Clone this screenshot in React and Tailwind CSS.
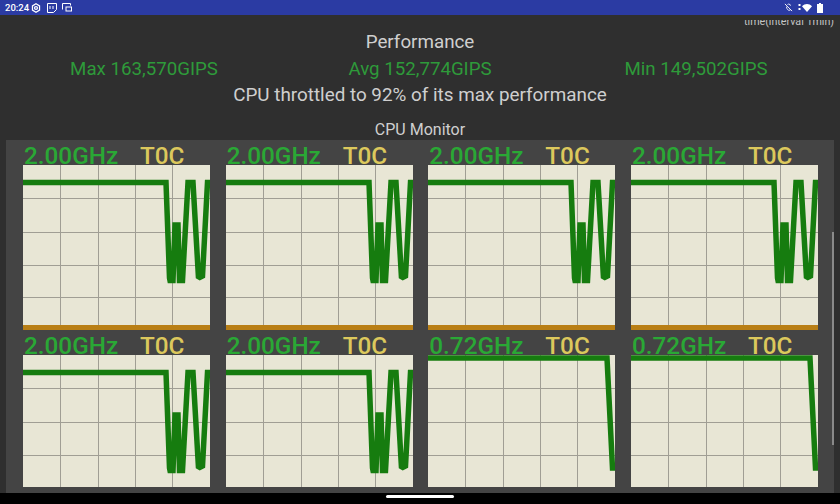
import React from "react";

const fast = "0,17.5 143,17.5 146.5,113 147,115.5 150,115.5 152,60 155,60 156.5,115.5 159.5,115.5 165,17.5 170,17.5 175.5,113 179.5,111 184.5,17.5 187,17.5";
const slow = "0,3 179,3 184.5,113 187,113";
const W = 187;

function Chart({ points, height, bar }) {
  const hl = [33, 67, 100, 132].filter((y) => y < height);
  const vl = [37, 75, 112, 149];
  return (
    <div className="relative bg-[#e8e6d5]" style={{ height }}>
      <svg width={W} height={height} viewBox={`0 0 ${W} ${height}`} className="block">
        {hl.map((y) => (
          <line key={y} x1="0" x2={W} y1={y + 0.5} y2={y + 0.5} stroke="#a09e94" strokeWidth="1" />
        ))}
        {vl.map((x) => (
          <line key={x} x1={x + 0.5} x2={x + 0.5} y1="0" y2={height} stroke="#a09e94" strokeWidth="1" />
        ))}
        <polyline points={points} fill="none" stroke="#167c0f" strokeWidth="5.5" strokeLinejoin="miter" strokeMiterlimit="1.5" />
      </svg>
      {bar && <div className="h-[5px] bg-[#b97f15] absolute left-0 right-0 bottom-0" />}
    </div>
  );
}

function Cell({ freq, points, height, bar }) {
  return (
    <div className="w-[187px] shrink-0">
      <div className="flex h-[25px] pt-[3px] text-[24.3px] font-medium leading-[25px] whitespace-nowrap">
        <span className="w-[117px] pl-px text-[#2aa835]">{freq}</span>
        <span className="text-[#dcc85c]">T0C</span>
      </div>
      <Chart points={points} height={height} bar={bar} />
    </div>
  );
}

function StatusLeft() {
  return (
    <div className="flex items-center text-white text-[9.5px] font-medium leading-none">
      <span className="ml-[5px] w-[26px] whitespace-nowrap">20:24</span>
      <svg width="10" height="10" viewBox="0 0 24 24" fill="none" stroke="#fff" strokeWidth="3">
        <path d="M12 2l8.5 5v10L12 22l-8.5-5V7z" />
        <circle cx="12" cy="12" r="3.5" />
      </svg>
      <svg width="10" height="10" viewBox="0 0 10 10" className="ml-[6px]" fill="none" stroke="#fff" strokeWidth="1">
        <path d="M.5.5h9v6l-3 3h-6z" />
        <path d="M3 3v3M6 3v3" />
      </svg>
      <svg width="10" height="9" viewBox="0 0 10 9" className="ml-[5px]" fill="none" stroke="#fff" strokeWidth="1">
        <path d="M.5 6.5v-6h8v2" />
        <rect x="4" y="4" width="5.5" height="4" />
      </svg>
    </div>
  );
}

function StatusRight() {
  return (
    <div className="flex items-center mr-[17px]">
      <svg width="9" height="9" viewBox="0 0 10 10" fill="none" stroke="#fff" strokeWidth="1">
        <path d="M1 1l8 8M3 4v2l2 2 2 0M7 3V2L5 1 4 2" />
      </svg>
      <svg width="3" height="7" viewBox="0 0 3 7" className="ml-[5px]" fill="#fff">
        <rect x="0.5" y="0" width="2" height="2" />
        <rect x="0.5" y="4" width="2" height="2" />
      </svg>
      <svg width="10" height="8" viewBox="0 0 10 8" className="ml-[1px]" fill="#fff">
        <path d="M0 2.2C3 -.6 7 -.6 10 2.2L5 8z" />
      </svg>
      <svg width="6" height="10" viewBox="0 0 6 10" className="ml-[5px]" fill="#fff">
        <path d="M2 0h2v1h2v9H0V1h2z" />
      </svg>
    </div>
  );
}

export default function App() {
  return (
    <div className="w-[840px] h-[504px] overflow-hidden flex flex-col bg-[#2f2f2f] font-['Roboto',sans-serif]">
      <div className="h-[15px] shrink-0 bg-[#2b3ba3] flex items-center justify-between">
        <StatusLeft />
        <StatusRight />
      </div>
      <div className="flex-1 min-h-0 flex flex-col items-center">
        <div className="w-full h-[8px] mt-[5px] overflow-hidden flex items-end justify-end pr-[6px]">
          <span className="text-[10.7px] leading-[13px] text-[#c4c4c4] shrink-0 whitespace-nowrap">time(interval 1min)</span>
        </div>
        <div className="mt-[2px] text-[18.8px] leading-[24px] text-[#cfcfcf]">Performance</div>
        <div className="w-[828px] grid grid-cols-3 mt-[3px] text-[18.7px] leading-[24px] text-[#2e9a3a] text-center">
          <span>Max 163,570GIPS</span>
          <span>Avg 152,774GIPS</span>
          <span>Min 149,502GIPS</span>
        </div>
        <div className="mt-[2px] text-[18.85px] leading-[24px] text-[#cfcfcf]">CPU throttled to 92% of its max performance</div>
        <div className="mt-[12px] text-[16px] leading-[21px] text-[#cfcfcf]">CPU Monitor</div>
        <div className="w-[828px] flex-1 min-h-0 overflow-hidden bg-[#444444] relative">
          <div className="pl-[17px] pr-[16px] flex justify-between">
            <Cell freq="2.00GHz" points={fast} height={165} bar />
            <Cell freq="2.00GHz" points={fast} height={165} bar />
            <Cell freq="2.00GHz" points={fast} height={165} bar />
            <Cell freq="2.00GHz" points={fast} height={165} bar />
          </div>
          <div className="pl-[17px] pr-[16px] flex justify-between">
            <Cell freq="2.00GHz" points={fast} height={132} />
            <Cell freq="2.00GHz" points={fast} height={132} />
            <Cell freq="0.72GHz" points={slow} height={132} />
            <Cell freq="0.72GHz" points={slow} height={132} />
          </div>
          <div className="absolute right-0 top-[92px] h-[213px] w-[2px] bg-[#8a8a8a]" />
        </div>
      </div>
      <div className="h-[11px] shrink-0 bg-black flex justify-center pt-[2px]">
        <div className="w-[68px] h-[3px] rounded-full bg-white" />
      </div>
    </div>
  );
}
